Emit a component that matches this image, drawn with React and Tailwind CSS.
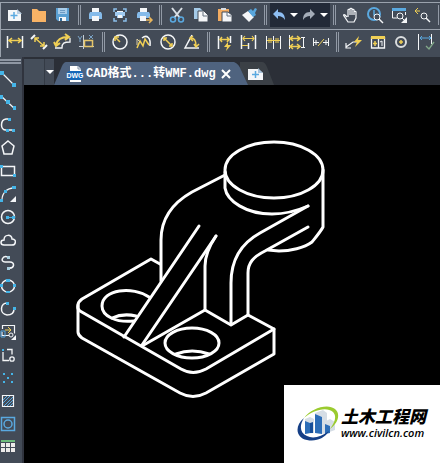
import React, { useState } from 'react';
import { clsx } from 'clsx';

const W = '#f4f6f8';
const Y = '#f0cf55';
const B = '#5aa9e0';
const C = '#45b5e8';

// File / edit icons, drawn on a 24px grid
const FILE_ICONS = [
  { name: 'New', art: <><path d="M5 7h9l4 3v8H5z" fill={W} /><path d="M14 6l5 5h-5z" fill="#b9cfe4" /><path d="M11 9v7M7.500 12.500h7" stroke={B} strokeWidth="1.500" /></> },
  { name: 'Open', art: <path d="M5 6h5l2 2h7v11H5z" fill="#f8b366" /> },
  { name: 'Save', art: <><path d="M5 5h13v13H7l-2-2z" fill="#5ba0d3" /><path d="M7 5h9v6H7z" fill="#a9cdea" /><path d="M9 7.500h5M9 9.500h5" stroke="#6d9bc4" /><path d="M8 14h7v4H8z" fill={W} /><path d="M9 15h2v3H9z" fill="#356f9e" /></> },
];

const PRINT_ICONS = [
  { name: 'Print', art: <><path d="M8 5h7v4H8z" fill={W} /><path d="M6 9h11l1 2v5H5v-5z" fill="#85bbea" /><path d="M8 13h7v5H8z" fill={W} /></> },
  { name: 'Print preview', art: <><path d="M6 9V6h3M15 6h3v3M18 15v3h-3M9 18H6v-3" fill="none" stroke="#8cc0ec" strokeWidth="1.500" /><path d="M9 8h6v1h2v4h-2v2H9v-2H7V9h2z" fill="#9fc9ef" /><path d="M9 8h6v1H9zM10 12h4v3h-4z" fill={W} /></> },
  { name: 'Publish', art: <><path d="M8 5h7v4H8z" fill={W} /><path d="M6 9h11l1 2v4H5v-4z" fill="#85bbea" /><path d="M8 13h6v5H8z" fill={W} /><path d="M14 17h5M17 14l3 3-3 3" fill="none" stroke="#e9b65c" strokeWidth="1.500" /></> },
];

const CLIP_ICONS = [
  { name: 'Cut', art: <><path d="M7 5l8 10M17 5L9 15" stroke="#d9e0e6" strokeWidth="2" /><g fill="none" stroke={B} strokeWidth="1.500"><circle cx="8" cy="16.500" r="2.500" /><circle cx="16" cy="16.500" r="2.500" /></g></> },
  { name: 'Copy', art: <><path d="M5 5h6l3 3v8H5z" fill="#a5cbe9" /><path d="M9 8h6l4 4v7H9z" fill={W} stroke="#434b57" /><path d="M14 9v4h4" fill="none" stroke="#65717f" /></> },
  { name: 'Paste', art: <><path d="M5 6h11v12H5z" fill="#f2ac62" /><path d="M8 5h5v2H8z" fill="#d9dde2" /><path d="M9 9h6l4 3v7H9z" fill={W} stroke="#434b57" /><path d="M14 9v4h4" fill="none" stroke="#65717f" /></> },
  { name: 'Match properties', art: <><path d="M5 12l6-4 6 6-5 5z" fill={W} /><path d="M11 8l3-2 2 2 2-3 2 1-2 4 1 2-3 2z" fill="#58a6dc" /></> },
];

const ZOOM_ICONS = [
  { name: 'Pan', art: <path d="M8 14l-2-2c-1-1-2 0-1 1l4 6h6l2-4V9c0-1-2-1-2 0v3-5c0-1-2-1-2 0v5-6c0-1-2-1-2 0v6-5c0-1-2-1-2 0v7" fill="none" stroke={W} strokeWidth="1.200" /> },
  { name: 'Zoom realtime', art: <><circle cx="11" cy="11" r="6" fill="none" stroke={B} strokeWidth="2" /><path d="M11 7v5h3" fill="none" stroke={B} strokeWidth="1.500" /><circle cx="14" cy="14" r="3" fill="#434b57" stroke={W} /><path d="M16 16l4 4" stroke={W} strokeWidth="1.500" /></> },
  { name: 'Zoom window', art: <><path d="M5.500 6v9h5M18.500 9v3" stroke={W} fill="none" /><path d="M5 5h14v3H5z" fill={B} /><circle cx="13" cy="13" r="3" fill="#434b57" stroke={W} /><path d="M15 15l3 3" stroke={W} /><path d="M20 14v6h-6z" fill={W} /></> },
  { name: 'Zoom previous', art: <><path d="M4 8h5M7 5L4 8l3 3" fill="none" stroke={Y} /><circle cx="13" cy="13" r="3" fill="none" stroke={W} /><path d="M15 15l4 4" stroke={W} strokeWidth="1.500" /></> },
];

// Dimension toolbar
const DIM_ICONS = [
  { name: 'Linear', art: <><path d="M4.500 6v12M19.500 6v12" stroke={W} strokeWidth="1.500" /><path d="M6 10.500h12M9 8l-3 2.500L9 13M15 8l3 2.500-3 2.500" fill="none" stroke={Y} strokeWidth="1.500" /></> },
  { name: 'Aligned', art: <><path d="M4 9l4-4M16 19l4-4" stroke={W} strokeWidth="2" /><path d="M8 8l9 8M8 12V8h4M17 12v4h-4" fill="none" stroke={Y} strokeWidth="1.500" /></> },
  { name: 'Arc length', art: <><path d="M5 15c1-5 4-8 12-8M14 4l4 3-4 3M3 12l2 4 4-3" fill="none" stroke={Y} strokeWidth="2" /><path d="M4 18h7c0-5 2-6 8-6V8" fill="none" stroke={W} strokeWidth="1.300" /></> },
  { name: 'Ordinate', art: <><path d="M8.500 5v14M4 16.500h15" stroke="#c6ced6" /><path d="M9.500 10.500h8v6h-8z" fill="none" stroke="#e5c56a" strokeWidth="1.500" /><path d="M3 6l2 3 2-3M5 9v3M14 5l4 4M18 5l-4 4" fill="none" stroke="#7ba4c7" /></> },
];

const RADIUS_ICONS = [
  { name: 'Radius', art: <><circle cx="12" cy="12" r="7" fill="none" stroke={W} strokeWidth="1.500" /><path d="M12 12L8 8M7 11V7h4" fill="none" stroke={Y} strokeWidth="1.500" /></> },
  { name: 'Jogged', art: <><path d="M5 18l3-7 3 5 2-7 4 6" fill="none" stroke={Y} strokeWidth="1.500" /><path d="M5 15V9l3 3" fill="none" stroke="#d8cda8" /><path d="M10 8c5-4 9 0 8 8" fill="none" stroke={W} strokeWidth="1.500" /></> },
  { name: 'Diameter', art: <><circle cx="12" cy="12" r="7" fill="none" stroke={W} strokeWidth="1.500" /><path d="M8 8l8 8M8 11V8h3M16 13v3h-3" fill="none" stroke={Y} strokeWidth="1.500" /></> },
  { name: 'Angular', art: <><path d="M12 5L5 18h14" fill="none" stroke={W} strokeWidth="1.500" /><path d="M11 8c4 0 5 3 5 8M13 6l-3 2 3 3M14 14l2 3 3-3" fill="none" stroke={Y} strokeWidth="1.500" /></> },
];

const CHAIN_ICONS = [
  { name: 'Quick dimension', art: <><path d="M5.500 6v13M17.500 6v7" stroke={W} strokeWidth="1.500" /><path d="M7 9.500h10M9 7L7 9.500 9 12M14 7l2 2.500-2 2.500" fill="none" stroke={Y} strokeWidth="1.500" /><path d="M15 12l-4 5h3l-1 4 5-6h-3z" fill={Y} /></> },
  { name: 'Baseline', art: <><path d="M4.500 5v14M11.500 13v6M18.500 5v14" stroke={W} strokeWidth="1.500" /><path d="M6 8.500h11M8 6L6 8.500 8 11M15 6l2 2.500-2 2.500M5 15.500h6" fill="none" stroke={Y} strokeWidth="1.200" /></> },
  { name: 'Continue', art: <><path d="M5.500 6v13M12.500 6v13M19.500 6v13" stroke={W} /><path d="M6 10.500h13M8 8v5M10 8v5M15 8v5M17 8v5" stroke={Y} /></> },
  { name: 'Dimension space', art: <><path d="M4.500 5v14M16 7.500h4M16 17.500h4M18.500 7v10" stroke={W} /><path d="M5 8.500h10M5 16.500h10M8 6L5 8.500 8 11M12 6l3 2.500-3 2.500M8 14l-3 2.500L8 19M12 14l3 2.500-3 2.500" fill="none" stroke={Y} strokeWidth="1.500" /></> },
  { name: 'Dimension break', art: <><path d="M4.500 8v8M19.500 8v8M5 12.500h5M14 12.500h5M7 10v5M17 10v5" stroke={W} /><path d="M9 16l6-7" stroke={Y} /></> },
];

const LEADER_ICONS = [
  { name: 'Leader', art: <><path d="M4 17l7-5h5M4 13v5h5" fill="none" stroke={W} strokeWidth="1.200" /><path d="M17 6l-5 6h3l-2 5 7-7h-4z" fill={Y} /></> },
  { name: 'Tolerance', art: <><path d="M5.500 7v11h13V7M12.500 7v11" fill="none" stroke={W} strokeWidth="1.300" /><path d="M5 6h14v3H5z" fill={Y} /><path d="M7 13.500h4M9 11v5" stroke={Y} strokeWidth="1.500" /><path d="M14 12l2-1v5" fill="none" stroke={W} /></> },
  { name: 'Center mark', art: <><circle cx="11" cy="12" r="5" fill="none" stroke="#dadddf" strokeWidth="2" /><path d="M11 10v4M9 12h4" stroke={Y} strokeWidth="1.500" /></> },
  { name: 'Inspection', art: <><path d="M4.500 4v16M17.500 4v10" stroke={W} /><path d="M6 8h11M8 6L6 8l2 2M15 6l2 2-2 2" fill="none" stroke={B} /><path d="M12 16l3 3 5-7" fill="none" stroke="#83a98a" strokeWidth="1.300" /></> },
];

// Draw toolbar, 16px grid with square grips at the control points
const DRAW_ICONS = [
  { name: 'Line', art: <><path d="M2 2l12 12" stroke={W} strokeWidth="1.300" /><path d="M0 0h4v4H0zM12 12h4v4h-4z" fill={C} /></> },
  { name: 'Construction line', art: <><path d="M1 2l14 13" stroke={W} strokeWidth="1.300" /><path d="M0 1h3v4H0zM6 6h4v4H6zM13 12h3v4h-3z" fill={C} /></> },
  { name: 'Polyline', art: <><path d="M9 2H6C0 3 0 13 6 13h7" fill="none" stroke={W} strokeWidth="1.500" /><path d="M8 1h3v3H8zM6 12h3v3H6zM12 12h3v3h-3z" fill={C} /></> },
  { name: 'Polygon', art: <path d="M8 1l6 5-2 8H4L2 6z" fill="none" stroke={W} strokeWidth="1.500" /> },
  { name: 'Rectangle', art: <><path d="M1.500 3.500h13v9h-13z" fill="none" stroke={W} strokeWidth="1.500" /><path d="M0 2h3v3H0zM13 11h3v3h-3z" fill={C} /></> },
  { name: 'Arc', art: <><path d="M2 14C2 7 7 2 14 2" fill="none" stroke={W} strokeWidth="1.300" /><path d="M12 0h4v3h-4zM4 4h3v3H4zM0 13h3v3H0z" fill={C} /><path d="M16 10v6h-6z" fill={W} /></> },
  { name: 'Circle', art: <><circle cx="8" cy="8" r="6.500" fill="none" stroke={W} strokeWidth="1.500" /><path d="M6 7h3v3H6zM12 7h3v3h-3zM9 8h4v1H9z" fill={C} /></> },
  { name: 'Revision cloud', art: <path d="M4 13C0 13 0 8 4 8c0-6 8-6 8-1 5 0 4 6 0 6z" fill="none" stroke={W} strokeWidth="1.500" /> },
  { name: 'Spline', art: <><path d="M8 2C2 0 0 7 5 7h5c5 0 5 7-2 6" fill="none" stroke={W} strokeWidth="1.500" /><path d="M7 1h3v3H7zM7 12h3v3H7z" fill="#a9cfe0" /></> },
  { name: 'Ellipse', art: <><ellipse cx="8" cy="8" rx="6.500" ry="6" fill="none" stroke={W} strokeWidth="1.500" /><path d="M6 1h4v3H6zM0 6h3v3H0zM13 6h3v3h-3zM6 13h4v2H6z" fill={C} /></> },
  { name: 'Ellipse arc', art: <><path d="M8 2C0 1-1 13 7 14c4 0 7-2 7-6" fill="none" stroke={W} strokeWidth="1.500" /><path d="M6 1h3v3H6zM13 6h3v3h-3z" fill={C} /></> },
  { name: 'Insert block', art: <><path d="M2.500 5V1.500h12v8M9 11.500H2V8" fill="none" stroke={W} strokeWidth="1.200" /><path d="M5 6h6M8 3l3 3-3 3" fill="none" stroke={Y} /><path d="M1 7h4v6H1z" fill="none" stroke={B} /><circle cx="11" cy="11" r="2" fill="#434b57" stroke={W} /><path d="M16 11v5h-5z" fill={W} /></> },
  { name: 'Make block', art: <><path d="M7 2.500h5v5M3 5v8.500h6" fill="none" stroke={W} strokeWidth="1.300" /><path d="M2 2h2v2H2z" fill={C} /><circle cx="12" cy="12" r="2.200" fill="none" stroke={W} strokeWidth="1.300" /></> },
  { name: 'Point', art: <path d="M3 3h2v2H3zM11 3h2v2h-2zM7 7h2v2H7zM3 11h2v2H3zM11 11h2v2h-2z" fill={C} /> },
  { name: 'Hatch', art: <><path d="M2.500 2.500h11v11h-11z" fill="none" stroke={W} strokeWidth="1.200" /><path d="M3 7l4-4M3 10l7-7M4 13l9-9M7 13l6-6M10 13l3-3" stroke={B} /></> },
  { name: 'Region', art: <><path d="M1.500 1.500h13v13h-13z" fill="none" stroke={B} strokeWidth="1.500" /><circle cx="8" cy="8" r="4" fill="none" stroke={B} strokeWidth="1.500" /></> },
  { name: 'Table', art: <><path d="M1 1h14v2H1z" fill="#6dbb7c" /><path d="M1 4h4v4H1zM6 4h4v4H6zM11 4h4v4h-4zM1 9h4v4H1zM6 9h4v4H6zM11 9h4v4h-4z" fill="#eceae9" /></> },
];

function ToolGroup({ items }) {
  return items.map((item) => (
    <button key={item.name} type="button" aria-label={item.name} title={item.name} className="h-6 w-6 shrink-0 hover:bg-white/10">
      <svg viewBox="0 0 24 24" className="h-6 w-6">{item.art}</svg>
    </button>
  ));
}

function Divider() {
  return <div className="mx-[3px] mt-[2px] h-5 w-[3px] shrink-0 border-x border-[#929aa6]" />;
}

function Caret() {
  return (
    <svg viewBox="0 0 8 6" className="h-[6px] w-2">
      <path d="M0 1h8L4 5z" fill="#ffffff" />
    </svg>
  );
}

function HistoryButtons() {
  return (
    <div className="flex h-6 w-[60px] shrink-0 items-center justify-between bg-[#222a38] px-[2px]">
      <button type="button" aria-label="Undo">
        <svg viewBox="0 0 14 14" className="h-[14px] w-[14px]"><path d="M1 6l5-5v3c5 0 7 3 7 8-2-3-4-4-7-4v3z" fill="#8ebef3" /></svg>
      </button>
      <button type="button" aria-label="Undo history"><Caret /></button>
      <button type="button" aria-label="Redo">
        <svg viewBox="0 0 14 14" className="h-[14px] w-[14px]"><path d="M13 6L8 1v3C3 4 1 7 1 12c2-3 4-4 7-4v3z" fill="#a4adb9" /></svg>
      </button>
      <button type="button" aria-label="Redo history"><Caret /></button>
    </div>
  );
}

function DrawToolbar() {
  const [active, setActive] = useState(null);
  return (
    <aside className="flex w-6 shrink-0 flex-col border-r-2 border-[#30343e] bg-[#434b57]">
      <div className="mt-[2px] mb-[3px] h-[5px] w-[21px] border-y-2 border-[#8f97a3]" />
      {DRAW_ICONS.map((item) => (
        <button
          key={item.name}
          type="button"
          aria-label={item.name}
          title={item.name}
          onClick={() => setActive(item.name)}
          className={clsx('flex h-[23px] w-4 shrink-0 items-center', active === item.name && 'bg-white/10')}
        >
          <svg viewBox="0 0 16 16" className="h-4 w-4">{item.art}</svg>
        </button>
      ))}
    </aside>
  );
}

function TabBar() {
  return (
    <div className="flex h-7 shrink-0 items-end bg-[#2b2f37]">
      <div className="h-[26px] w-[21px] border-r border-[#343b45] bg-[#454e5a]" />
      <button type="button" aria-label="Drawing list" className="flex h-[26px] w-[9px] items-center justify-center bg-[#434b57]">
        <Caret />
      </button>
      <div className="flex h-[23px]">
        <svg viewBox="0 0 12 23" className="h-[23px] w-3"><path d="M0 23L8 4q2-4 4-4v23z" fill="#4f637f" /></svg>
        <div className="flex items-center bg-[#4f637f]">
          <button type="button" className="flex items-center gap-[2px] whitespace-nowrap font-['Liberation_Mono','Noto_Sans_CJK_SC',monospace] text-[12px] leading-4 font-bold text-white">
            <svg viewBox="0 0 18 18" className="h-[18px] w-[18px]">
              <path d="M4 1h8l3 3v13H4z" fill="#ffffff" />
              <path d="M12 1v3h3" fill="none" stroke="#8093aa" />
              <rect x="1" y="6" width="16" height="9" rx="3" fill="#1567b8" />
              <text x="9" y="13" textAnchor="middle" fontSize="7" fontFamily="Liberation Sans, sans-serif" fill="#ffffff">DWG</text>
            </svg>
            <span>CAD格式...转WMF.dwg</span>
          </button>
          <button type="button" aria-label="Close tab" className="ml-[2px] flex h-4 w-4 items-center justify-center">
            <svg viewBox="0 0 10 10" className="h-[10px] w-[10px]"><path d="M1 1l8 8M9 1L1 9" stroke="#ffffff" strokeWidth="2" /></svg>
          </button>
        </div>
        <svg viewBox="0 0 14 23" className="h-[23px] w-[14px]"><path d="M6 0h8v23H6z" fill="#3b4046" /><path d="M0 0q5 2 7 8l7 15H0z" fill="#4f637f" /></svg>
      </div>
      <button type="button" aria-label="New tab" className="h-[23px]">
        <svg viewBox="0 0 26 23" className="h-[23px] w-[26px]">
          <path d="M0 23V0h14q3 0 5 5l7 18z" fill="#3b4046" />
          <path d="M0 7h10l5 4v7H0z" fill={W} />
          <path d="M10 6l5 5h-5z" fill="#a9c3da" />
          <path d="M7.500 9v7M4 12.500h7" stroke={B} strokeWidth="1.500" />
        </svg>
      </button>
    </div>
  );
}

// Isometric bracket: base plate with two holes, rib, bent arm and boss
function Bracket() {
  return (
    <svg viewBox="24 85 416 378" role="img" aria-label="Isometric bracket" className="h-[378px] w-[416px] shrink-0">
      <g fill="none" stroke="#ffffff" strokeWidth="3" strokeLinejoin="round" strokeLinecap="round">
        <ellipse cx="274" cy="170" rx="49" ry="28" />
        <path d="M225 172v16C227 201 246 214 272 214Q290 214 308 206" />
        <path d="M323 170V227C321 231 316 237 312 242C304 248 290 251 279 251L268 250" />
        <path d="M225 175L192 192C169 205 161 223 161 240V281" />
        <path d="M308 206L260 233C240 244 231 261 231 283V324" />
        <path d="M308 227L265 251C253 257 248 263 248 273V315" />
        <path d="M199 226L124 337M216 236L142 345" />
        <path d="M216 236C208 248 205 256 205 266V310" />
        <path d="M160 264L151 259 82 299Q78 302 78 305V332Q78 335 82 338L180 393Q193 400 206 393L274 354V329L248 315 231 325 205 310 142 346" />
        <path d="M78 305Q77 309 80 311L181 369Q193 376 206 369L274 329" />
        <ellipse cx="192" cy="343" rx="27" ry="15" />
        <path d="M176 354Q192 348 209 354" />
        <path d="M149 297C133 286 102 289 102 306C102 316 116 323 134 321" />
        <path d="M112 318Q123 313 136 316" />
      </g>
    </svg>
  );
}

function SiteLogo() {
  return (
    <a href="#home" className="absolute right-0 bottom-0 flex h-[78px] w-[156px] items-center gap-[2px] bg-white pl-[13px]">
      <svg viewBox="0 0 42 36" className="h-9 w-[42px] shrink-0">
        <path d="M18 7l8-3 4 3v21l-12-1zM8 13l5-2 4 2v14l-9 1zM27 16l6-3 5 3v8l-11 4z" fill="#d5dde5" />
        <path d="M8 15l5 2v10l-5 1zM18 8l7 3v17l-7-1zM28 18l5 2v7l-5 1z" fill="#2c6db7" />
        <path d="M13 17l3-1v11h-3z" fill="#174e98" />
        <path d="M7 12C14 2 31-3 38 3c6 5 3 14-5 20 5-7 7-13 3-17C29 0 15 5 7 12z" fill="#9bcb2f" />
        <path d="M7 12C-3 20-1 32 10 34c9 2 18-2 22-9-8 6-16 8-22 5C3 27 2 20 7 12z" fill="#153f86" />
      </svg>
      <span className="flex flex-col text-black">
        <span className="font-['Liberation_Sans','Noto_Sans_CJK_SC',sans-serif] text-[17px] leading-[18px] font-black whitespace-nowrap italic">土木工程网</span>
        <span className="font-['Open_Sans',sans-serif] text-[11px] leading-3 font-semibold italic">www.civilcn.com</span>
      </span>
    </a>
  );
}

export default function App() {
  return (
    <div className="flex min-h-screen flex-col overflow-hidden bg-black font-['Liberation_Sans',sans-serif]">
      <header className="bg-[#434b57] pt-[2px]">
        <div className="flex h-[27px] items-start overflow-hidden border-t border-l border-[#9aa2ad] pl-[2px]">
          <ToolGroup items={FILE_ICONS} />
          <Divider />
          <ToolGroup items={PRINT_ICONS} />
          <Divider />
          <ToolGroup items={CLIP_ICONS} />
          <Divider />
          <HistoryButtons />
          <Divider />
          <ToolGroup items={ZOOM_ICONS} />
          <Divider />
        </div>
        <div className="flex h-7 items-start overflow-hidden border-t border-l border-[#9aa2ad] pl-[2px]">
          <ToolGroup items={DIM_ICONS} />
          <Divider />
          <ToolGroup items={RADIUS_ICONS} />
          <Divider />
          <ToolGroup items={CHAIN_ICONS} />
          <Divider />
          <ToolGroup items={LEADER_ICONS} />
        </div>
      </header>

      <div className="flex flex-1">
        <DrawToolbar />
        <main className="relative flex min-w-0 flex-1 flex-col">
          <TabBar />
          <Bracket />
          <SiteLogo />
        </main>
      </div>
    </div>
  );
}
